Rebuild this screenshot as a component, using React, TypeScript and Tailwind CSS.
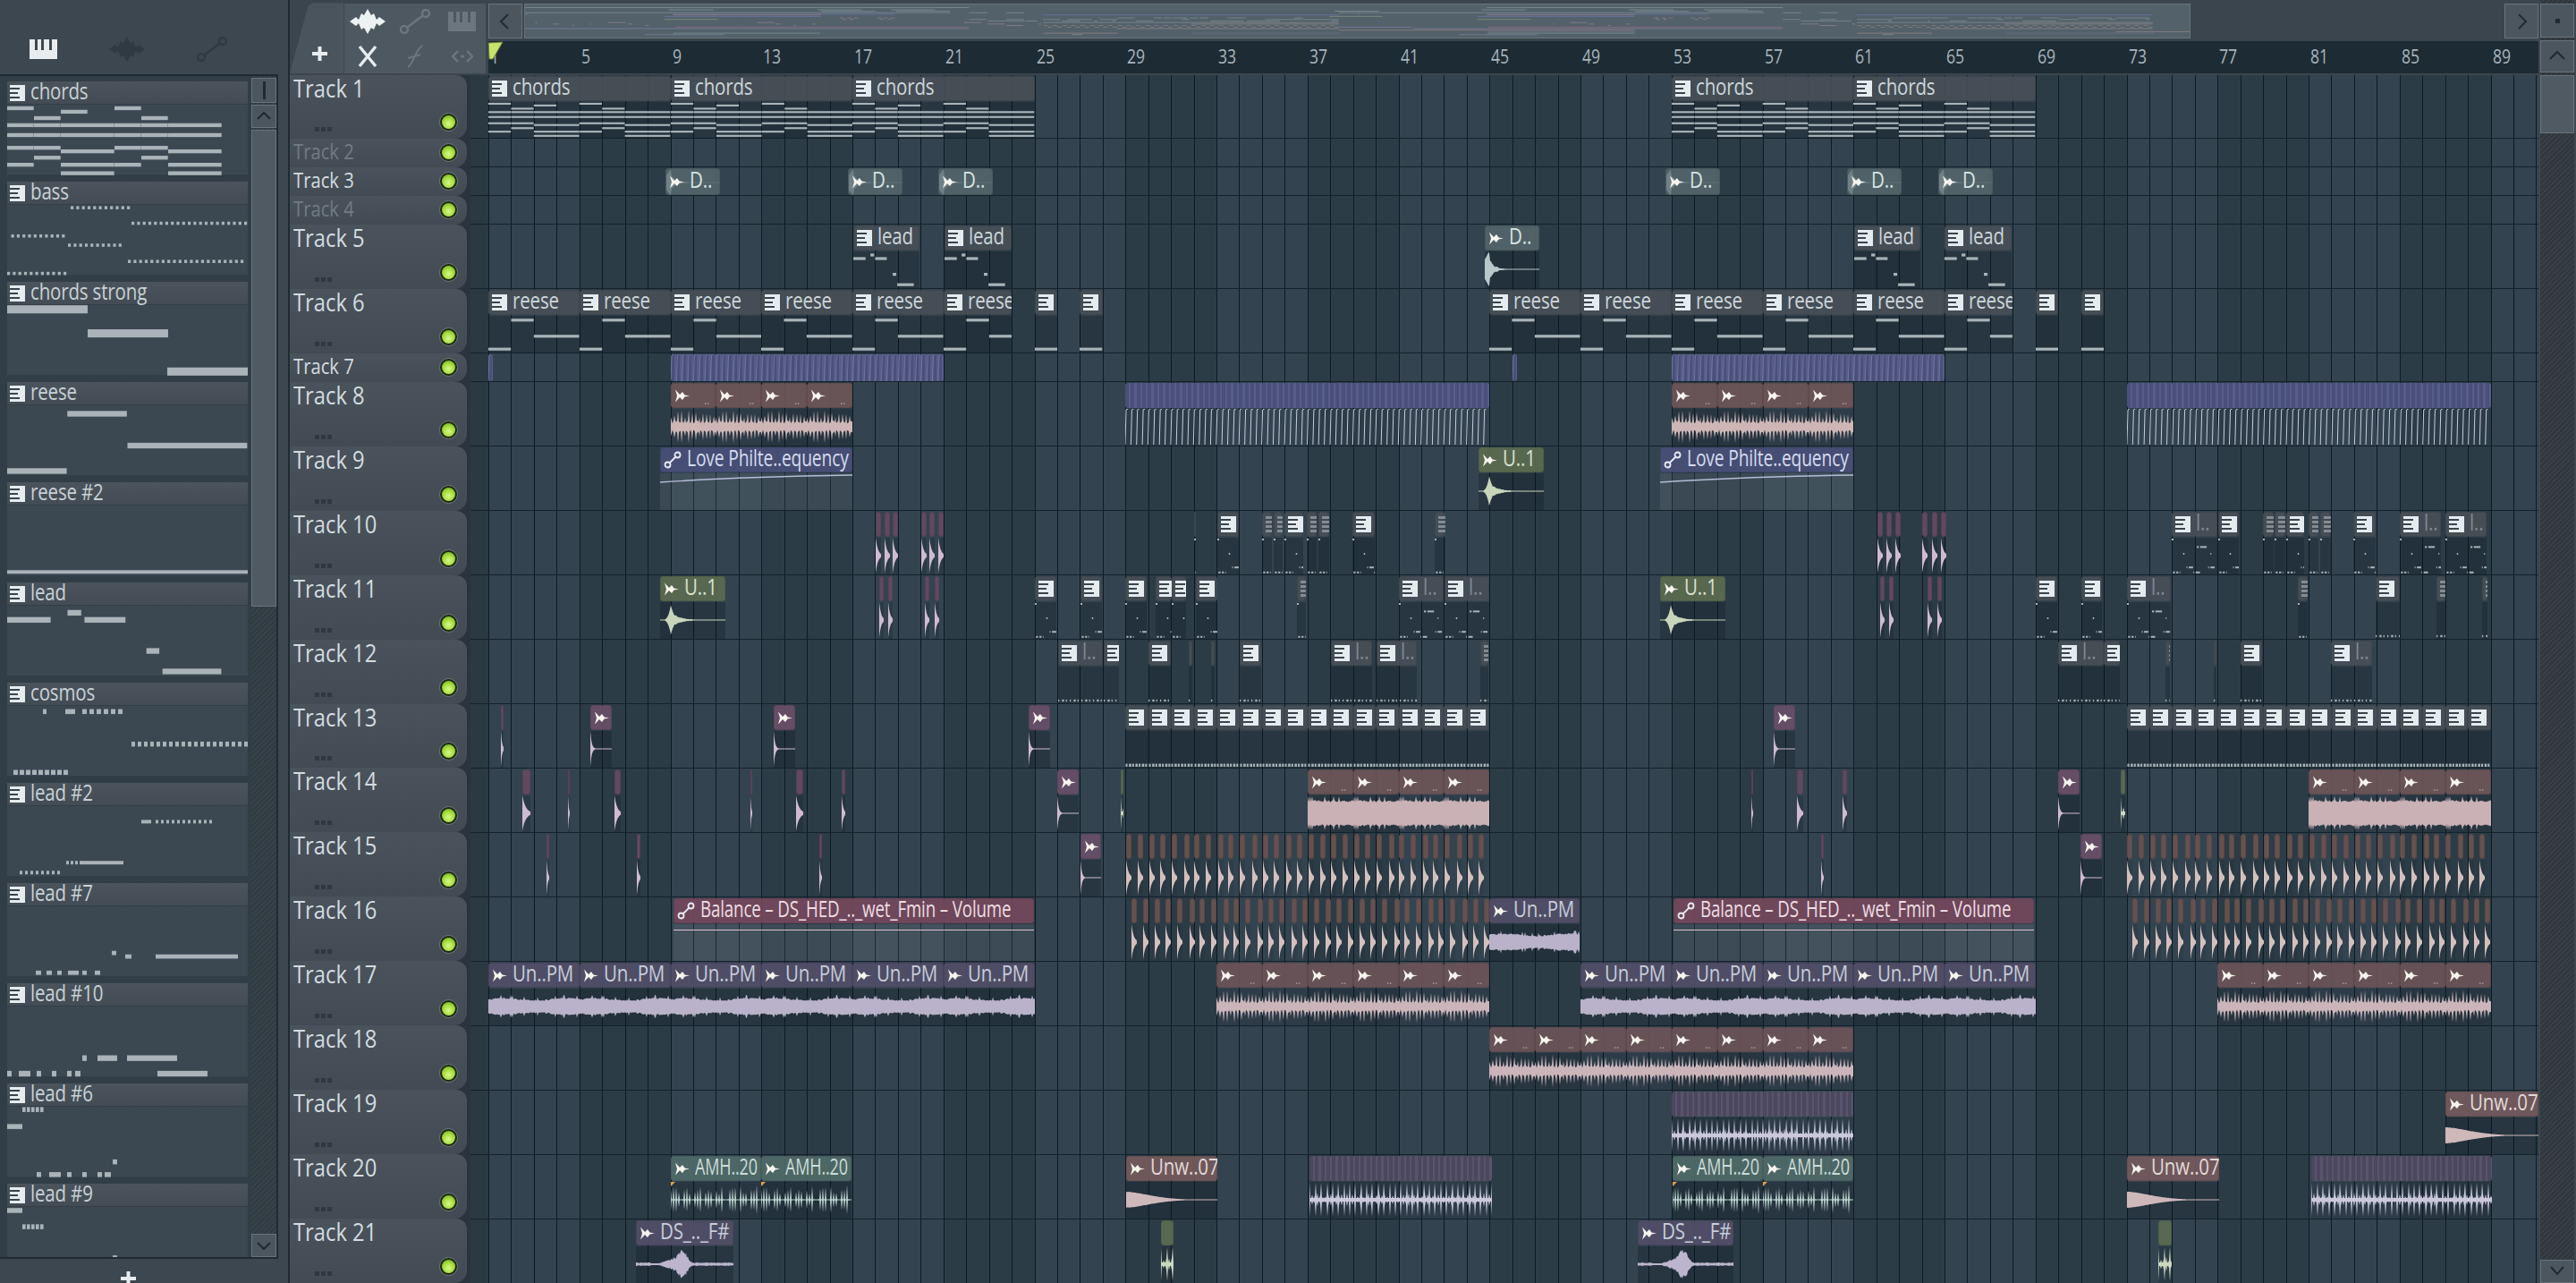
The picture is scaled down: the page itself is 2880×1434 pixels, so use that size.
import React from "react";

const BAR = 25.44;
const GRID_LEFT = 526;
const bar = (n: number) => 546 + (n - 1) * BAR;

type Note = [number, number, number];
type Pattern = { len: number; h: number; notes: Note[] };

const dots = (x0: number, x1: number, y: number, step = 6.3, w = 3.2): Note[] => {
  const out: Note[] = [];
  for (let x = x0; x < x1; x += step) out.push([x, y, w]);
  return out;
};

const chordSeg = [[0, 1], [1, 1], [2, 2], [4, 1], [5, 1], [6, 2]];
const PATTERNS: Record<string, Pattern> = {
  chords: {
    len: 8,
    h: 0.055,
    notes: [
      [0, 0.05, 1], [4, 0.05, 1], [2, 0.1, 1], [1, 0.19, 1], [5, 0.19, 1],
      ...chordSeg.map(([x, w]) => [x, 0.29, w] as Note),
      ...chordSeg.map(([x, w]) => [x, 0.43, w] as Note),
      [0, 0.61, 1], [1, 0.61, 1], [4, 0.61, 1], [5, 0.61, 1], [2, 0.66, 2], [6, 0.66, 2],
      [1, 0.75, 1], [5, 0.75, 1], [0, 0.85, 1], [2, 0.85, 2], [4, 0.85, 1], [6, 0.85, 2],
      [2, 0.97, 2], [6, 0.97, 2],
    ],
  },
  reese: { len: 4, h: 0.08, notes: [[0, 0.93, 1], [1, 0.12, 1], [2, 0.57, 2]] },
  reese2b: { len: 1, h: 0.08, notes: [[0, 0.93, 1]] },
  lead: {
    len: 3,
    h: 0.08,
    notes: [[0, 0.2, 0.55], [0.75, 0.1, 0.18], [0.96, 0.2, 0.52], [1.73, 0.64, 0.17], [1.93, 0.93, 0.74]],
  },
  tiny: {
    len: 2,
    h: 0.05,
    notes: [
      [0, 0.05, 0.09], [0.5, 0.45, 0.07], [0.65, 0.83, 0.05], [0.75, 0.83, 0.2], [0.05, 0.97, 0.1], [0.2, 0.97, 0.1],
      [0.35, 0.97, 0.04], [0.95, 0.97, 0.04], [1.1, 0.26, 0.1], [1.25, 0.26, 0.3], [1.7, 0.45, 0.05],
      [1.6, 0.83, 0.05], [1.7, 0.83, 0.2], [1.05, 0.97, 0.2],
    ],
  },
  bottom: {
    len: 4,
    h: 0.06,
    notes: Array.from({ length: 24 }, (_, i) => [i * 0.17, 0.95, i % 3 === 1 ? 0.1 : 0.06] as Note),
  },
  dash: {
    len: 1,
    h: 0.09,
    notes: Array.from({ length: 7 }, (_, i) => [i * 0.143 + 0.02, 0.96, i % 2 ? 0.11 : 0.09] as Note),
  },
  strong: { len: 269, h: 0.115, notes: [[0, 0.06, 90], [90, 0.4, 90], [179, 0.94, 90]] },
  bass: {
    len: 269,
    h: 0.045,
    notes: [
      ...dots(71, 135, 0.04), ...dots(139, 269, 0.26), ...dots(4.5, 67, 0.44),
      ...dots(68, 130, 0.57), ...dots(135, 265, 0.8), ...dots(0, 63, 0.97),
    ],
  },
  reese2: { len: 269, h: 0.05, notes: [[0, 0.94, 269]] },
  cosmos: {
    len: 269,
    h: 0.07,
    notes: [[40, 0.08, 4], [65, 0.08, 11], ...dots(84, 130, 0.08, 8, 5), ...dots(139, 268, 0.54, 7, 4), ...dots(7, 65, 0.94, 7, 5)],
  },
  lead2: {
    len: 269,
    h: 0.05,
    notes: [[150, 0.22, 11], ...dots(166, 231, 0.22, 6, 3), ...dots(66, 82, 0.8, 5, 3), [84, 0.8, 46], ...dots(14, 58, 0.94, 6, 3)],
  },
  lead7: {
    len: 269,
    h: 0.06,
    notes: [[117, 0.66, 5], [132, 0.71, 7], [166, 0.71, 92], [32, 0.94, 6], [44, 0.94, 6], [56, 0.94, 5], [68, 0.94, 12], [84, 0.94, 5], [98, 0.94, 6]],
  },
  lead10: {
    len: 269,
    h: 0.08,
    notes: [[84, 0.73, 5], [101, 0.73, 22], [134, 0.73, 56], [0, 0.95, 5], [13, 0.95, 13], [33, 0.95, 5], [50, 0.95, 5], [67, 0.95, 5], [76, 0.95, 6], [168, 0.95, 56]],
  },
  lead6: {
    len: 269,
    h: 0.07,
    notes: [...dots(17, 41, 0.04, 5, 3.6), [0, 0.28, 17], [118, 0.78, 5], [33, 0.96, 5], [47, 0.96, 13], [67, 0.96, 5], [84, 0.96, 5], [101, 0.96, 5], [109, 0.96, 7]],
  },
  lead9: {
    len: 269,
    h: 0.07,
    notes: [[0, 0.05, 17], ...dots(17, 41, 0.28, 5, 3.6), [118, 0.72, 5]],
  },
};

const SIDE_ITEMS: { name: string; pattern: string; barW: number }[] = [
  { name: "chords", pattern: "chords", barW: 30 },
  { name: "bass", pattern: "bass", barW: 1 },
  { name: "chords strong", pattern: "strong", barW: 1 },
  { name: "reese", pattern: "reese", barW: 67.25 },
  { name: "reese #2", pattern: "reese2", barW: 1 },
  { name: "lead", pattern: "lead", barW: 90 },
  { name: "cosmos", pattern: "cosmos", barW: 1 },
  { name: "lead #2", pattern: "lead2", barW: 1 },
  { name: "lead #7", pattern: "lead7", barW: 1 },
  { name: "lead #10", pattern: "lead10", barW: 1 },
  { name: "lead #6", pattern: "lead6", barW: 1 },
  { name: "lead #9", pattern: "lead9", barW: 1 },
];

// seeded noise so the waveforms stay the same between runs
const rnd = (n: number) => {
  const s = Math.sin(n * 127.1 + 11.7) * 43758.5453;
  return s - Math.floor(s);
};

type WaveType = "hit" | "olive" | "spike" | "pulse" | "dense" | "noise" | "comb" | "am" | "swell" | "unw" | "saw";

const envelope = (type: WaveType, x: number, w: number) => {
  const t = x / w;
  const r = rnd(x * 1.37 + w);
  switch (type) {
    case "hit":
      return Math.max(t < 0.08 ? 0.55 + t * 5.5 : (0.55 * Math.exp(-(t - 0.08) * 9) + 0.45 * Math.exp(-(t - 0.08) * 30)) * (0.6 + 0.4 * r), 0.02);
    case "olive":
      return Math.max(
        t < 0.17 ? Math.pow(t / 0.17, 4) * 0.95 : (0.42 * Math.exp(-(t - 0.17) * 7) + 0.58 * Math.exp(-(t - 0.17) * 60)) * (0.7 + 0.3 * r),
        0.03,
      );
    case "spike":
      return w > 15 ? Math.max(Math.exp(-t * 16), 0.025) : Math.exp(-t * 2.4);
    case "pulse":
      return x % 4 < 1 ? 0.5 + 0.5 * r : 0.18 + 0.18 * r;
    case "dense":
      return 0.62 + 0.14 * r + (r > 0.88 ? 0.2 : 0);
    case "noise":
      return 0.36 + 0.1 * r + (r > 0.93 ? 0.13 : 0) + 0.06 * Math.sin(t * 9);
    case "comb":
      return x % 6.36 < 1 ? 0.95 : x % 3 < 1 ? 0.3 * r + 0.12 : 0.1;
    case "am":
      return (x % 12.7) / 12.7 < 0.72 ? (x % 3 < 1 ? 0.35 + 0.5 * r : 0.04) : 0.02;
    case "swell":
      return Math.max(
        (t > 0.15 && t < 0.6
          ? Math.exp(-Math.pow((t - 0.48) / 0.05, 2)) * 0.65 + Math.exp(-Math.pow((t - 0.42) / 0.14, 2)) * 0.38
          : 0.1) *
          (0.6 + 0.4 * r),
        0.05,
      );
    case "unw":
      return Math.max(0.46 * Math.exp(-Math.pow(t / 0.36, 1.7)) * (0.95 + 0.05 * r), 0.02);
    default:
      return 0;
  }
};

const Wave = ({ type, w, h, color }: { type: WaveType; w: number; h: number; color: string }) => {
  const mid = h / 2;
  if (type === "saw") {
    let d = "";
    for (let x = 0; x < w; x += 6.36) d += `M${x.toFixed(1)} ${h} L${(x + 1).toFixed(1)} 1 L${(x + 3).toFixed(1)} 0 `;
    return (
      <svg width={w} height={h} className="block">
        <path d={d} fill="none" stroke={color} strokeWidth="1" />
      </svg>
    );
  }
  const top: string[] = [];
  const bot: string[] = [];
  const count = Math.ceil(w);
  for (let x = 0; x <= count; x++) {
    const a = envelope(type, x, w);
    top.push(`${x} ${(mid - a * mid).toFixed(1)}`);
    bot.unshift(`${x} ${(mid + a * mid * 0.98).toFixed(1)}`);
  }
  return (
    <svg width={w} height={h} className="block">
      <path d={`M${top.join(" L")} L${bot.join(" L")} Z`} fill={color} />
    </svg>
  );
};

const Notes = ({ pattern, width, height, scale }: { pattern: Pattern; width: number; height: number; scale: number }) => (
  <svg width={width} height={height} viewBox={`0 0 ${width / scale} 1`} preserveAspectRatio="none" className="block">
    {pattern.notes.map(([x, y, w], i) => (
      <rect key={i} x={x} y={y - pattern.h / 2} width={Math.max(w - 0.01, 0)} height={pattern.h} fill="#a9b3b8" />
    ))}
  </svg>
);

const PianoIcon = ({ dim = false }: { dim?: boolean }) => (
  <svg width="17" height="18" viewBox="0 0 17 18" className={dim ? "shrink-0 opacity-40" : "shrink-0"}>
    <rect width="17" height="18" fill="#e4ecf0" />
    <rect y="3" width="11" height="2" fill="#39444c" />
    <rect y="8" width="9" height="2" fill="#39444c" />
    <rect y="13" width="11" height="2" fill="#39444c" />
  </svg>
);

const WaveIcon = () => (
  <svg width="17" height="15" viewBox="0 0 17 14" className="shrink-0">
    <path d="M1 0 L6 5.5 L9 2.5 L11.5 6 L17 7 L11.5 8 L9 11.5 L6 8.5 L1 14 L3 7 Z" fill="#f7f4ee" />
  </svg>
);

const AutoIcon = ({ color = "#e8ecf2" }: { color?: string }) => (
  <svg width="20" height="20" viewBox="0 0 20 20" className="shrink-0" fill="none" stroke={color} strokeWidth="1.8">
    <circle cx="4.5" cy="15.5" r="3" />
    <circle cx="15.5" cy="4.5" r="3" />
    <path d="M7 13 L13 7" />
  </svg>
);

const ToolWave = ({ color = "#eef1f2" }: { color?: string }) => (
  <svg width="40" height="28" viewBox="0 0 40 28" className="shrink-0">
    <path
      d="M0 14 L7 9 L10 12 L13 5 L16 7 L20 0 L24 7 L27 5 L30 12 L33 9 L40 14 L33 19 L30 16 L27 23 L24 21 L20 28 L16 21 L13 23 L10 16 L7 19 Z"
      fill={color}
    />
  </svg>
);

const ToolAuto = ({ color }: { color: string }) => (
  <svg width="34" height="28" viewBox="0 0 34 28" fill="none" stroke={color} strokeWidth="2.4" className="shrink-0">
    <circle cx="5" cy="23" r="4" />
    <circle cx="29" cy="5" r="4" />
    <path d="M9 20 L25 8" />
  </svg>
);

const ToolPiano = ({ color, hole }: { color: string; hole: string }) => (
  <svg width="31" height="22" viewBox="0 0 31 22" className="shrink-0">
    <rect width="31" height="22" fill={color} />
    <rect x="6" width="3" height="12" fill={hole} />
    <rect x="13" width="3" height="12" fill={hole} />
    <rect x="22" width="3" height="12" fill={hole} />
  </svg>
);

const Plus = () => (
  <svg width="17" height="16" viewBox="0 0 17 16">
    <rect x="6.5" width="4" height="16" fill="#e8ecee" />
    <rect y="6" width="17" height="4" fill="#e8ecee" />
  </svg>
);

type Kind = { hd: string; txt: string; body: string; wave?: WaveType; color?: string; icon?: "wave" | "auto" | "piano" };

const KINDS: Record<string, Kind> = {
  pat: { hd: "bg-[#474f57ee] border border-[#3d454d]", txt: "text-[#cdd6da]", body: "bg-[#0c161e48]", icon: "piano" },
  teal: { hd: "bg-[#52656aee] border border-[#47585d]", txt: "text-[#d9e2e2]", body: "bg-[#0c161e48]", wave: "hit", color: "#b9c8cb", icon: "wave" },
  brown: { hd: "bg-[#6c5558ee] border border-[#604a4c]", txt: "text-[#a8979a]", body: "bg-[#0c161e28]", wave: "pulse", color: "#cdb6b5", icon: "wave" },
  brownDense: { hd: "bg-[#6c5558ee] border border-[#604a4c]", txt: "text-[#a8979a]", body: "bg-[#0c161e28]", wave: "dense", color: "#c9b1b5", icon: "wave" },
  brownPulse: { hd: "bg-[#6a5458ee] border border-[#5e4a4e]", txt: "text-[#a8979a]", body: "bg-[#0c161e28]", wave: "pulse", color: "#cbb5bb", icon: "wave" },
  pink: { hd: "bg-[#684e68ee] border border-[#5c445c]", txt: "text-[#d8d0d8]", body: "bg-[#0c161e48]", wave: "spike", color: "#d0bcd2", icon: "wave" },
  sliver: { hd: "bg-[#654a62ee] border border-[#5a4058]", txt: "", body: "bg-[#0c161e38]", wave: "spike", color: "#cfbbd1" },
  sliceB: { hd: "bg-[#69524fee] border border-[#5d4846]", txt: "", body: "bg-[#0c161e20]", wave: "spike", color: "#d3c0bd" },
  oliveS: { hd: "bg-[#5b6b52ee] border border-[#505f48]", txt: "", body: "bg-[#0c161e38]", wave: "comb", color: "#cbd7bf" },
  unpm: { hd: "bg-[#514e68ee] border border-[#46435c]", txt: "text-[#c6cdda]", body: "bg-[#0c161e48]", wave: "noise", color: "#b9b2ca", icon: "wave" },
  olive: { hd: "bg-[#5b6b50ee] border border-[#505f46]", txt: "text-[#d8e0d0]", body: "bg-[#0c161e48]", wave: "olive", color: "#c9d5ba", icon: "wave" },
  amh: { hd: "bg-[#4f6a68ee] border border-[#455e5c]", txt: "text-[#ccdcd8]", body: "bg-[#0c161e48]", wave: "am", color: "#b5cfc9", icon: "wave" },
  rosy: { hd: "bg-[#735a5cee] border border-[#664e50]", txt: "text-[#e2d8d8]", body: "bg-[#0c161e48]", wave: "unw", color: "#cfb8ba", icon: "wave" },
  swell: { hd: "bg-[#514e68ee] border border-[#46435c]", txt: "text-[#c6cdda]", body: "bg-[#0c161e48]", wave: "swell", color: "#bdb5cd", icon: "wave" },
  love: { hd: "bg-[#484f78ee] border border-[#3f456a]", txt: "text-[#d6dcee]", body: "bg-[#ffffff12]", icon: "auto" },
  balance: { hd: "bg-[#74485cee] border border-[#683f52]", txt: "text-[#ecdde2]", body: "bg-[#ffffff14]", icon: "auto" },
  stripe: { hd: "bg-[repeating-linear-gradient(90deg,#4a5079_0_4px,#575d8b_4px_6.36px)]", txt: "", body: "", wave: "saw", color: "#c8cce2" },
  stripeDim: { hd: "bg-[repeating-linear-gradient(90deg,#4a475e_0_4px,#57546c_4px_6.36px)]", txt: "", body: "bg-[#0c161e28]", wave: "comb", color: "#cbc8dc" },
};

type Clip = { t: number; x: number; w: number; k: string; l?: string; p?: string; dim?: boolean; mute?: boolean; flat?: boolean; line?: number };
const CLIPS: Clip[] = [];
const add = (t: number, x: number, w: number, k: string, l?: string, extra: Partial<Clip> = {}) => CLIPS.push({ t, x, w, k, l, ...extra });
const run = (t: number, from: number, count: number, len: number, k: string, l?: string, extra: Partial<Clip> = {}) => {
  for (let i = 0; i < count; i++) add(t, bar(from + i * len), len * BAR, k, l, extra);
};
const pat = (t: number, x: number, w: number, p = "tiny", l?: string, mute = false) => add(t, x, w, "pat", l, { p, dim: w < 14, mute });
const slices = (t: number, x: number, count: number, k: string, w = 6) => {
  for (let i = 0; i < count; i++) add(t, x + i * 12.72 + (i % 3 === 2 ? 1 : 0), w, k);
};

[1, 9, 17, 53, 61].forEach((n) => run(1, n, 1, 8, "pat", "chords", { p: "chords" }));
[744, 948, 1049, 1862, 2065, 2167].forEach((x) => add(3, x, 61, "teal", "D.."));
[953.6, 1056, 2072.5, 2174].forEach((x) => add(5, x, 74.5, "pat", "lead", { p: "lead" }));
add(5, 1659.5, 61, "teal", "D..");
run(6, 1, 5, 4, "pat", "reese", { p: "reese" });
add(6, bar(21), 3 * BAR, "pat", "reese", { p: "reese" });
[25, 27, 69, 71].forEach((n) => add(6, bar(n), BAR, "pat", undefined, { p: "reese2b" }));
run(6, 45, 5, 4, "pat", "reese", { p: "reese" });
add(6, bar(65), 3 * BAR, "pat", "reese", { p: "reese" });
add(7, 546, 5, "stripe", undefined, { flat: true });
add(7, bar(9), 12 * BAR, "stripe", undefined, { flat: true });
add(7, 1691, 5, "stripe", undefined, { flat: true });
add(7, bar(53), 12 * BAR, "stripe", undefined, { flat: true });
run(8, 9, 4, 2, "brown", "..");
add(8, bar(29), 16 * BAR, "stripe");
run(8, 53, 4, 2, "brown", "..");
add(8, bar(73), 16 * BAR, "stripe");
add(9, 737.5, 215.5, "love", "Love Philte..equency", { line: 1 });
add(9, 1652.5, 73, "olive", "U..1");
add(9, 1856, 216, "love", "Love Philte..equency", { line: 1 });
[979, 989, 998, 1030, 1039, 1049, 2099, 2109, 2119, 2149, 2160, 2170].forEach((x) => add(10, x, 6, "sliver"));
pat(10, 1335, 2);
pat(10, 1361, 24);
pat(10, 1411, 11);
pat(10, 1424, 10);
pat(10, 1436, 21);
pat(10, 1461, 11);
pat(10, 1474, 12);
pat(10, 1512, 25);
pat(10, 1604, 12);
pat(10, 2428, 51, "tiny", "l..", true);
pat(10, 2480, 23);
pat(10, 2530, 12);
pat(10, 2543, 12);
pat(10, 2556, 20);
pat(10, 2581, 11);
pat(10, 2594, 12);
pat(10, 2631, 25);
pat(10, 2683, 46, "tiny", "l..", true);
pat(10, 2734, 46, "tiny", "l..", true);
add(11, 737.5, 73, "olive", "U..1");
[983, 993, 1034, 1045, 2102, 2112, 2155, 2166].forEach((x) => add(11, x, 5, "sliver"));
pat(11, 1157, 24);
pat(11, 1208, 24);
pat(11, 1258, 24);
pat(11, 1292, 18);
pat(11, 1310, 16);
pat(11, 1337, 24);
pat(11, 1449.5, 10.5);
pat(11, 1564, 50, "tiny", "l..", true);
pat(11, 1615, 50, "tiny", "l..", true);
add(11, 1856, 73, "olive", "U..1");
pat(11, 2276, 24);
pat(11, 2327, 23);
pat(11, 2378, 49, "tiny", "l..", true);
pat(11, 2569, 11);
pat(11, 2656, 27, "bottom");
pat(11, 2724, 10, "bottom");
pat(11, 2775, 6, "bottom");
pat(12, 1182.6, 50.5, "bottom", "l..", true);
pat(12, 1234, 17, "bottom");
pat(12, 1284, 25, "bottom");
pat(12, 1328.6, 4.5, "bottom");
pat(12, 1354, 4, "bottom");
pat(12, 1386, 24, "bottom");
pat(12, 1488, 46, "bottom", "l..", true);
pat(12, 1539, 45, "bottom", "l..", true);
pat(12, 1655, 9, "bottom");
pat(12, 2301, 51, "bottom", "l..", true);
pat(12, 2352, 18, "bottom");
pat(12, 2421, 5, "bottom");
pat(12, 2475, 3, "bottom");
pat(12, 2505, 24, "bottom");
pat(12, 2606, 46, "bottom", "l..", true);
add(13, 560, 3, "sliver");
[660, 865, 1150, 1983].forEach((x) => add(13, x, 24, "pink"));
run(13, 29, 16, 1, "pat", undefined, { p: "dash" });
run(13, 73, 16, 1, "pat", undefined, { p: "dash" });
[[584, 9], [635, 2], [687, 7], [839, 2], [890, 8], [941, 4], [1958, 2], [2009, 7], [2060, 5]].forEach(([x, w]) => add(14, x, w, "sliver"));
add(14, 1182, 24, "pink");
add(14, 2301, 24, "pink");
add(14, 1252.6, 3.5, "oliveS");
add(14, 2371, 4.5, "oliveS");
run(14, 37, 4, 2, "brownDense", "..");
run(14, 81, 4, 2, "brownDense", "..");
[[611, 3], [712, 4], [916, 3], [2036, 3]].forEach(([x, w]) => add(15, x, w, "sliver"));
add(15, 1208, 23, "pink");
add(15, 2326, 24, "pink");
slices(15, 1259, 32, "sliceB");
slices(15, 2378, 32, "sliceB");
add(16, 753, 403, "balance", "Balance – DS_HED_.._wet_Fmin – Volume", { line: 2 });
slices(16, 1265, 32, "sliceB");
add(16, 1665, 101, "unpm", "Un..PM");
add(16, 1871, 403, "balance", "Balance – DS_HED_.._wet_Fmin – Volume", { line: 2 });
slices(16, 2384, 32, "sliceB");
run(17, 1, 6, 4, "unpm", "Un..PM");
run(17, 33, 6, 2, "brownPulse", "..");
run(17, 49, 5, 4, "unpm", "Un..PM");
run(17, 77, 6, 2, "brownPulse", "..");
run(18, 45, 8, 2, "brownPulse", "..");
add(19, bar(53), 8 * BAR, "stripeDim");
add(19, 2734, 104, "rosy", "Unw..07");
add(20, 749.5, 101, "amh", "AMH..20");
add(20, 851, 101, "amh", "AMH..20");
add(20, 1259, 102, "rosy", "Unw..07");
add(20, 1464, 204, "stripeDim");
add(20, 1870, 101, "amh", "AMH..20");
add(20, 1971, 101, "amh", "AMH..20");
add(20, 2378, 103, "rosy", "Unw..07");
add(20, 2584, 202, "stripeDim");
add(21, 711, 109, "swell", "DS_.._F#");
add(21, 1298, 14, "oliveS");
add(21, 1831, 107, "swell", "DS_.._F#");
add(21, 2413, 15, "oliveS");

const TRACKS = Array.from({ length: 21 }, (_, i) => i + 1);
const isSmall = (t: number) => t === 2 || t === 3 || t === 4 || t === 7;
const rowH = (t: number) => (t === 1 ? 71 : isSmall(t) ? 32 : 72);
const rowClass = (t: number) => (t === 1 ? "h-[71px]" : isSmall(t) ? "h-[32px]" : "h-[72px]");
const LABELS = Array.from({ length: 23 }, (_, i) => i * 4 + 1);

const OVERVIEW_COLOR: Record<string, string> = {
  pat: "#8d9ba1", teal: "#8fa5a5", brown: "#a98a8a", brownDense: "#a98a8a", brownPulse: "#a98a8a", pink: "#a687a6",
  sliver: "#a687a6", sliceB: "#a08a88", oliveS: "#93a583", unpm: "#9087ad", olive: "#93a583", amh: "#86a8a2",
  rosy: "#a98f90", swell: "#9087ad", love: "#7a82bb", balance: "#a9708a", stripe: "#6f78b5", stripeDim: "#7c7896",
};

const Overview = () => {
  let y = 0;
  const ys: Record<number, number> = {};
  TRACKS.forEach((t) => {
    ys[t] = y;
    y += rowH(t);
  });
  const sx = 1863 / 2292;
  return (
    <svg width="1861" height="37" className="block">
      {CLIPS.map((c, i) => (
        <rect
          key={i}
          x={(c.x - 546) * sx}
          y={3 + (ys[c.t] / y) * 32}
          width={Math.max(c.w * sx, 1)}
          height="1"
          fill={OVERVIEW_COLOR[c.k]}
          opacity="0.6"
        />
      ))}
    </svg>
  );
};

const labelScale = (l: string) => {
  if (l.length > 30) return "scale-x-[.75]";
  if (l.length > 15) return "scale-x-[.77]";
  if (l.startsWith("AMH")) return "scale-x-[.72]";
  return "scale-x-[.82]";
};

const ClipView = ({ c }: { c: Clip }) => {
  const kind = KINDS[c.k];
  const small = isSmall(c.t);
  const lane = rowH(c.t) - 1;
  const showIcon = kind.icon && (c.w >= 14 || c.k === "pat");
  const bodyH = lane - 31;
  const hasBody = !small && !c.flat;
  const dotted = c.l === "..";
  return (
    <div className="absolute top-[1px] flex flex-col overflow-hidden" style={{ left: c.x - GRID_LEFT, width: c.w, height: lane - 1 }}>
      <div className={`relative flex h-[28px] shrink-0 items-center rounded-[3px] pb-[6px] ${small ? "h-full" : ""} ${kind.hd}`}>
        {small && kind.wave && (
          <div className="absolute inset-0 opacity-30">
            <Wave type={kind.wave} w={c.w} h={lane - 1} color={kind.color || "#fff"} />
          </div>
        )}
        {showIcon && (
          <span className="relative ml-[3px] mt-[6px] flex shrink-0 items-center">
            {kind.icon === "piano" && <PianoIcon dim={c.dim} />}
            {kind.icon === "wave" && <WaveIcon />}
            {kind.icon === "auto" && <AutoIcon />}
          </span>
        )}
        {c.l && (
          <span
            className={`relative inline-block shrink-0 origin-left whitespace-nowrap leading-none tracking-[-0.2px] ${labelScale(c.l)} ${
              dotted ? "ml-[16px] pt-[14px] text-[15px]" : "ml-[6px] text-[25px]"
            } ${c.mute ? "text-[#7f8a91]" : kind.txt}`}
          >
            {c.l}
          </span>
        )}
      </div>
      {hasBody && (
        <div className={`relative mt-[1px] flex-1 overflow-hidden ${kind.body}`}>
          {c.k === "pat" && c.p && <Notes pattern={PATTERNS[c.p]} width={c.w} height={bodyH} scale={BAR} />}
          {kind.wave && <Wave type={kind.wave} w={c.w} h={bodyH} color={kind.color || "#fff"} />}
          {c.k === "amh" && (
            <svg width="5" height="5" className="absolute left-0 top-0">
              <path d="M0 0 L5 0 L0 5 Z" fill="#dfa24a" />
            </svg>
          )}
          {c.line === 1 && (
            <svg width={c.w} height={bodyH} className="absolute inset-0">
              <path d={`M0 ${10} Q${c.w * 0.4} 4 ${c.w} 2`} fill="none" stroke="#b6bcd8" strokeWidth="1.4" />
            </svg>
          )}
          {c.line === 2 && <div className="absolute inset-x-0 top-[6px] h-[1px] bg-[#e3c1d2]" />}
        </div>
      )}
    </div>
  );
};

const TrackHeader = ({ t }: { t: number }) => {
  const small = isSmall(t);
  const muted = t === 2 || t === 4;
  return (
    <div className={`relative w-[198px] rounded-tr-[12px] rounded-br-[14px] bg-[linear-gradient(180deg,#4a535b,#424b53)] pl-[4px] ${rowClass(t)}`}>
      <div
        className={`origin-left scale-x-[.88] whitespace-nowrap leading-none ${small ? "pt-[3px] text-[23px]" : "pt-[1px] text-[27px]"} ${muted ? "text-[#717c83]" : "text-[#d4dce0]"}`}
      >
        Track {t}
      </div>
      {!small && (
        <div className="absolute bottom-[8px] left-[28px] flex gap-[2px]">
          <span className="h-[5px] w-[5px] bg-[#2f383f]" />
          <span className="h-[5px] w-[5px] bg-[#2f383f]" />
          <span className="h-[5px] w-[5px] bg-[#2f383f]" />
        </div>
      )}
      <div className={`absolute right-[10px] h-[21px] w-[21px] rounded-full border border-[#717e7c] bg-[#1c2a14] p-[2px] ${small ? "top-[5px]" : "bottom-[8px]"}`}>
        <div className="h-full w-full rounded-full bg-[radial-gradient(circle_at_50%_62%,#d8f88a_0%,#a5dc3e_50%,#5d9a16_100%)]" />
      </div>
    </div>
  );
};

const SideItem = ({ name, pattern, barW }: { name: string; pattern: string; barW: number }) => (
  <div className="w-[269px] shrink-0">
    <div className="flex h-[26px] items-center border-b border-[#333e46] bg-[linear-gradient(180deg,#4b545c,#434c54)] pb-[4px] pl-[3px]">
      <span className="mt-[4px] shrink-0">
        <PianoIcon />
      </span>
      <span className="ml-[6px] inline-block shrink-0 origin-left scale-x-[.82] whitespace-nowrap text-[25px] leading-none tracking-[-0.2px] text-[#c8d1d6]">
        {name}
      </span>
    </div>
    <div className="h-[79px] border-b border-[#333f48] bg-[#3b4852]">
      <Notes pattern={PATTERNS[pattern]} width={269} height={79} scale={barW} />
    </div>
  </div>
);

const ScrollBtn = ({ children, h }: { children?: React.ReactNode; h: string }) => (
  <div className={`flex shrink-0 items-center justify-center border border-[#69747c] bg-[#4c565f] ${h}`}>{children}</div>
);

const Chevron = ({ d }: { d: string }) => (
  <svg width="22" height="22" viewBox="0 0 22 22" fill="none" stroke="#1f2a31" strokeWidth="2">
    <path d={d} />
  </svg>
);

export default function App() {
  return (
    <div className="flex h-[1434px] w-[2880px] overflow-hidden bg-[#3d474f] font-['Open_Sans','DejaVu_Sans',sans-serif]">
      {/* picker */}
      <div className="flex w-[322px] shrink-0 flex-col">
        <div className="flex h-[83px] shrink-0 items-center gap-[58px] pl-[33px] pt-[26px]">
          <ToolPiano color="#e8ecee" hole="#3d474f" />
          <ToolWave color="#2f3a42" />
          <ToolAuto color="#2f3a42" />
        </div>
        <div className="flex h-[1324px] w-[311px] shrink-0 border-y-2 border-r-2 border-[#1f2b32] bg-[#323e47]">
          <div className="flex w-[281px] shrink-0 flex-col gap-[7px] overflow-hidden pl-[8px] pt-[6px]">
            {SIDE_ITEMS.map((s) => (
              <SideItem key={s.name} {...s} />
            ))}
          </div>
          <div className="flex w-[28px] shrink-0 flex-col gap-[2px] bg-[repeating-linear-gradient(135deg,#2f3a41_0_2px,#37424a_2px_4px)] pt-[2px]">
            <ScrollBtn h="h-[28px]">
              <div className="h-[20px] w-[3px] bg-[#1f2a31]" />
            </ScrollBtn>
            <ScrollBtn h="h-[26px]">
              <Chevron d="M4 14 L11 7 L18 14" />
            </ScrollBtn>
            <div className="h-[533px] shrink-0 border border-[#69747c] bg-[#4f5a62]" />
            <div className="flex-1" />
            <ScrollBtn h="h-[26px]">
              <Chevron d="M4 8 L11 15 L18 8" />
            </ScrollBtn>
          </div>
        </div>
        <div className="flex flex-1 items-start justify-center pr-[36px] pt-[14px]">
          <Plus />
        </div>
      </div>

      {/* playlist */}
      <div className="flex flex-1 border-l-2 border-[#1f2b32]">
        <div className="flex w-[2514px] shrink-0 flex-col">
          <div className="flex h-[84px] shrink-0 bg-[#3b454d]">
            <div className="flex h-[82px] w-[60px] shrink-0 items-end justify-center bg-[#4a545c] pb-[14px] pl-[6px] [clip-path:polygon(0_100%,34%_8%,44%_4%,100%_4%,100%_100%)]">
              <Plus />
            </div>
            <div className="ml-[1px] mt-[4px] grid h-[78px] w-[158px] shrink-0 grid-cols-3 place-items-center bg-[#4e5860]">
              <ToolWave />
              <ToolAuto color="#6c767e" />
              <ToolPiano color="#6c767e" hole="#4e5860" />
              <svg width="22" height="26" viewBox="0 0 22 26" stroke="#e8ecee" strokeWidth="3.4" fill="none">
                <path d="M2 2 L20 24 M20 2 L2 24" />
              </svg>
              <svg width="20" height="26" viewBox="0 0 20 26" stroke="#6c767e" strokeWidth="2" fill="none">
                <path d="M2 25 C8 22 10 6 18 1 M2 15 L16 11" />
              </svg>
              <svg width="24" height="14" viewBox="0 0 24 14" stroke="#6c767e" strokeWidth="2.4" fill="none">
                <path d="M7 1 L1 7 L7 13 M17 1 L23 7 L17 13 M10 7 L14 7" />
              </svg>
            </div>
            <div className="ml-[3px] flex flex-1 flex-col">
              <div className="mt-[4px] flex h-[39px] shrink-0">
                <ScrollBtn h="h-[39px] w-[38px]">
                  <Chevron d="M14 3 L6 11 L14 19" />
                </ScrollBtn>
                <div className="ml-[2px] h-[39px] w-[1863px] shrink-0 border border-[#68757b] bg-[#52616a]">
                  <Overview />
                </div>
                <div className="flex-1" />
                <ScrollBtn h="h-[39px] w-[38px]">
                  <Chevron d="M8 3 L16 11 L8 19" />
                </ScrollBtn>
              </div>
              <div className="relative mt-[3px] h-[36px] shrink-0 bg-[#1d2b34]">
                {LABELS.map((n) => (
                  <span
                    key={n}
                    className="absolute top-[7px] origin-left scale-x-[.84] text-[21px] leading-none text-[#a8b5bd]"
                    style={{ left: bar(n) - 546 + 2 }}
                  >
                    {n}
                  </span>
                ))}
                <svg width="17" height="24" viewBox="0 0 17 24" className="absolute left-0 top-0">
                  <path d="M0 2 L16 1 L5 20 L1 20 Z" fill="#c9e36f" stroke="#6b7f33" strokeWidth="1" />
                </svg>
              </div>
            </div>
          </div>

          <div className="flex min-h-0 flex-1">
            <div className="flex w-[202px] shrink-0 flex-col bg-[#29343c]">
              {TRACKS.map((t) => (
                <TrackHeader key={t} t={t} />
              ))}
            </div>
            <div className="relative flex-1 overflow-hidden">
              <div className="absolute inset-0 flex">
                <div className="w-[20px] shrink-0 bg-[#2b3943]" />
                {Array.from({ length: 91 }, (_, i) => (
                  <div
                    key={i}
                    className={`w-[25.44px] shrink-0 border-l-[1.5px] border-[#0c1a23] ${Math.floor(i / 4) % 2 === 0 ? "bg-[#334450]" : "bg-[#2c3c47]"}`}
                  />
                ))}
              </div>
              {TRACKS.map((t) => (
                <div key={t} className={`relative border-b-[1.5px] border-[#13212b] ${rowClass(t)}`}>
                  {CLIPS.filter((c) => c.t === t).map((c, i) => (
                    <ClipView key={i} c={c} />
                  ))}
                </div>
              ))}
            </div>
          </div>
        </div>

        <div className="ml-[2px] flex w-[38px] shrink-0 flex-col gap-[3px] bg-[repeating-linear-gradient(135deg,#2f363c_0_2px,#383f45_2px_4px)] pt-[4px]">
          <ScrollBtn h="h-[38px]">
            <div className="h-[5px] w-[5px] bg-[#1f2a31]" />
          </ScrollBtn>
          <ScrollBtn h="h-[36px]">
            <Chevron d="M3 14 L11 6 L19 14" />
          </ScrollBtn>
          <div className="h-[65px] shrink-0 border border-[#69747c] bg-[#4f5a62]" />
          <div className="flex-1" />
          <ScrollBtn h="h-[26px]">
            <Chevron d="M4 6 L11 14 L18 6" />
          </ScrollBtn>
        </div>
      </div>
    </div>
  );
}
